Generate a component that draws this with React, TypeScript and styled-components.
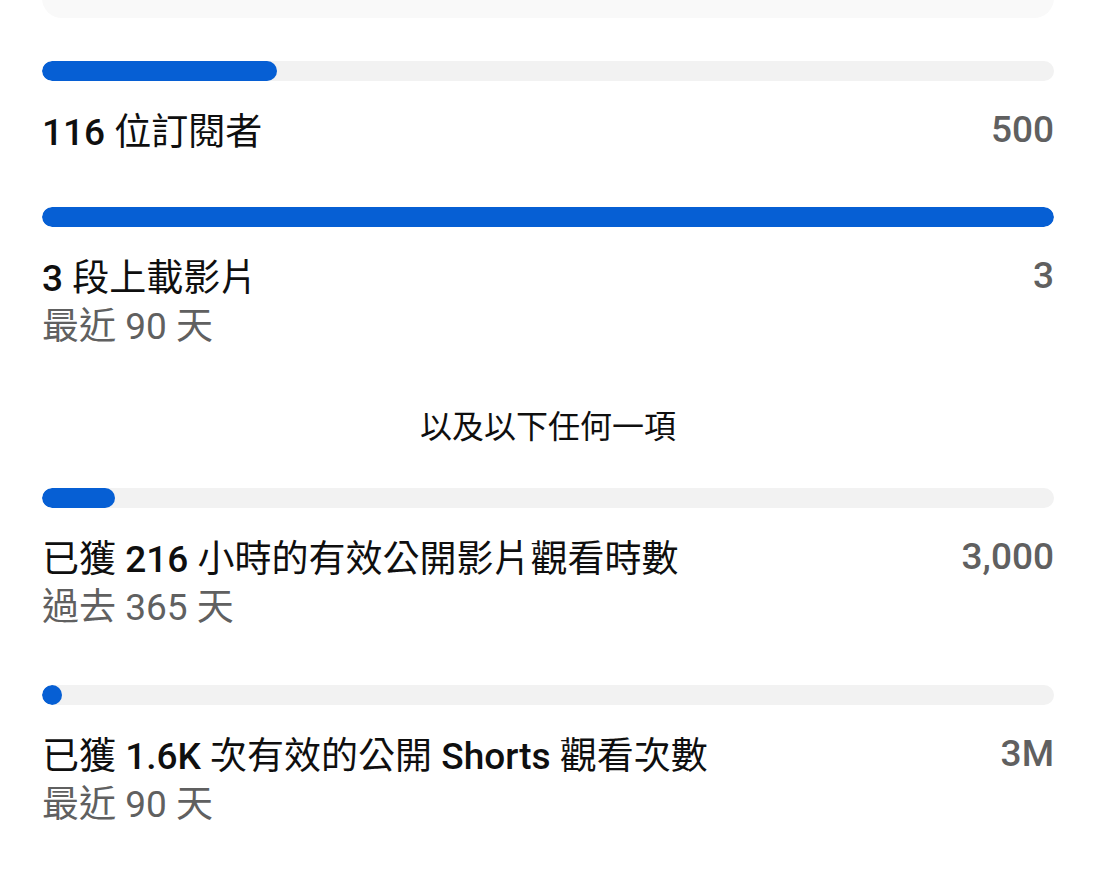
import React from "react";
import styled, { createGlobalStyle } from "styled-components";

const Global = createGlobalStyle`
  html, body { margin: 0; padding: 0; background: #ffffff; }
  body { font-family: Roboto, "Noto Sans CJK TC", sans-serif; color: #0f0f0f; }
`;

const Page = styled.div`
  width: 1096px;
  height: 872px;
  overflow: hidden;
  padding: 0 42px;
  box-sizing: border-box;
  display: flex;
  flex-direction: column;
`;

const TopCard = styled.div`
  margin-top: -40px;
  height: 58px;
  background: #f9f9f9;
  border-radius: 20px;
  flex-shrink: 0;
`;

const Requirement = styled.div<{ $mt: number }>`
  margin-top: ${(p) => p.$mt}px;
  display: flex;
  flex-direction: column;
`;

const Track = styled.div`
  height: 20px;
  border-radius: 10px;
  background: #f2f2f2;
  overflow: hidden;
  margin-bottom: 23px;
`;

const Fill = styled.div`
  height: 100%;
  min-width: 20px;
  border-radius: 10px;
  background: #065fd4;
`;

const Row = styled.div`
  display: flex;
  justify-content: space-between;
  align-items: center;
  height: 50px;
`;

const Title = styled.div`
  font-size: 37px;
  font-weight: 400;
  color: #0f0f0f;
  white-space: nowrap;
`;

const Strong = styled.span`
  font-weight: 500;
`;

const Target = styled.div`
  font-size: 37px;
  font-weight: 500;
  color: #606060;
`;

const Sub = styled.div`
  font-size: 37px;
  line-height: 52px;
  margin-top: 1px;
  color: #606060;
`;

const Divider = styled.div`
  margin-top: 49px;
  height: 50px;
  line-height: 50px;
  text-align: center;
  font-size: 32px;
  color: #0f0f0f;
`;

type Item = {
  pct: number;
  title: React.ReactNode;
  target: string;
  sub?: string;
  mt: number;
};

const Bar = ({ pct }: { pct: number }) => (
  <Track>
    <Fill style={{ width: `${pct}%` }} />
  </Track>
);

const Req = ({ item }: { item: Item }) => (
  <Requirement $mt={item.mt}>
    <Bar pct={item.pct} />
    <Row>
      <Title>{item.title}</Title>
      <Target>{item.target}</Target>
    </Row>
    {item.sub && <Sub>{item.sub}</Sub>}
  </Requirement>
);

export default function App() {
  const first: Item[] = [
    {
      pct: (116 / 500) * 100,
      title: (
        <>
          <Strong>116</Strong> 位訂閱者
        </>
      ),
      target: "500",
      mt: 43,
    },
    {
      pct: 100,
      title: (
        <>
          <Strong>3</Strong> 段上載影片
        </>
      ),
      target: "3",
      sub: "最近 90 天",
      mt: 53,
    },
  ];
  const second: Item[] = [
    {
      pct: (216 / 3000) * 100,
      title: (
        <>
          已獲 <Strong>216</Strong> 小時的有效公開影片觀看時數
        </>
      ),
      target: "3,000",
      sub: "過去 365 天",
      mt: 36,
    },
    {
      pct: 0.05,
      title: (
        <>
          已獲 <Strong>1.6K</Strong> 次有效的公開 <Strong>Shorts</Strong> 觀看次數
        </>
      ),
      target: "3M",
      sub: "最近 90 天",
      mt: 51,
    },
  ];
  return (
    <>
      <Global />
      <Page>
        <TopCard />
        {first.map((it, i) => (
          <Req key={i} item={it} />
        ))}
        <Divider>以及以下任何一項</Divider>
        {second.map((it, i) => (
          <Req key={i} item={it} />
        ))}
      </Page>
    </>
  );
}
